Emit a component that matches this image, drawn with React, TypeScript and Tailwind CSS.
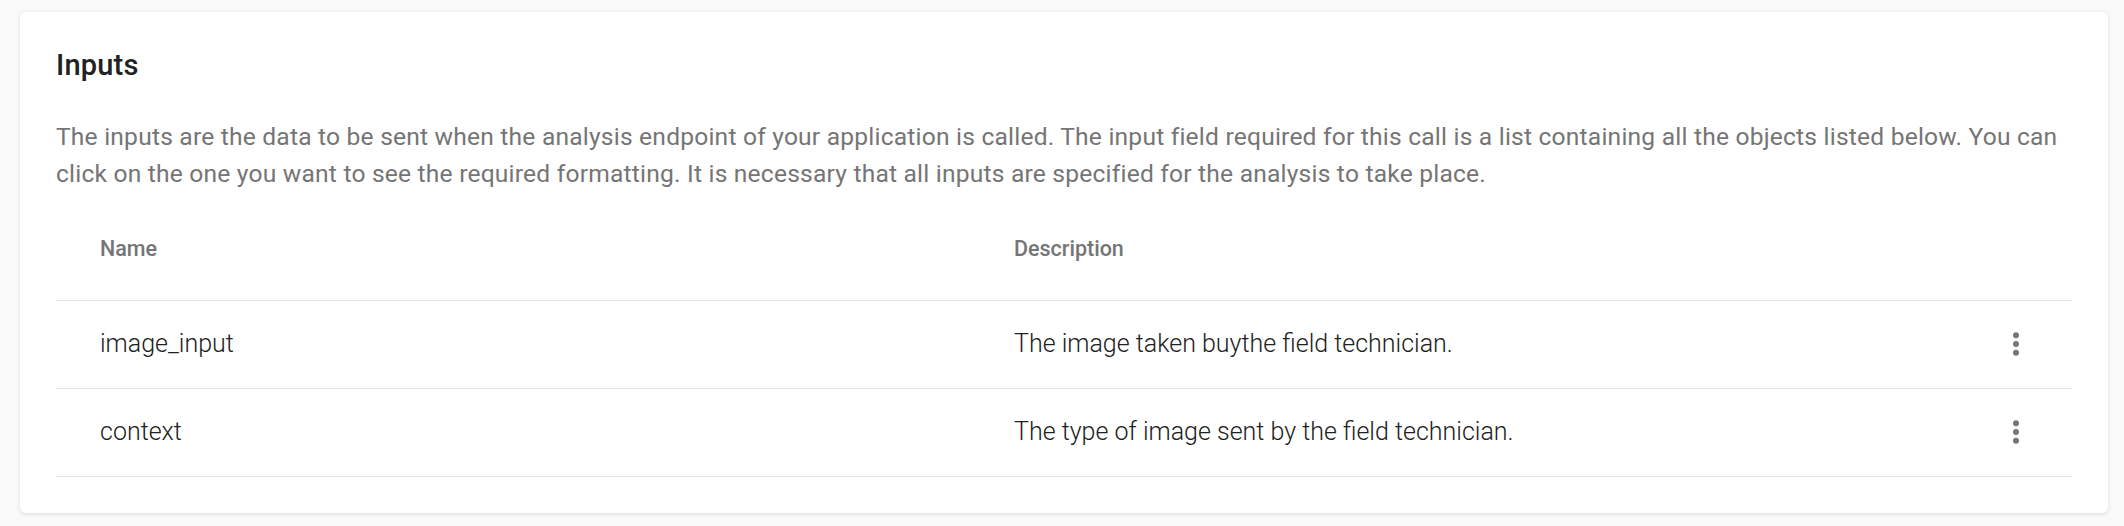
const inputs = [
  { name: 'image_input', description: 'The image taken buythe field technician.' },
  { name: 'context', description: 'The type of image sent by the field technician.' },
]

function MoreVert() {
  return (
    <svg width="34" height="34" viewBox="0 0 24 24" fill="#757575">
      <circle cx="12" cy="5.85" r="2.1" />
      <circle cx="12" cy="12" r="2.1" />
      <circle cx="12" cy="18.15" r="2.1" />
    </svg>
  )
}

export default function App() {
  return (
    <div
      className="min-h-screen bg-[#f9f9f9] pt-[12px] pl-[20px] pr-[16px]"
      style={{ fontFamily: 'Roboto, "Liberation Sans", sans-serif' }}
    >
      <div className="rounded-[6px] bg-white px-[36px] pt-[36px] pb-[36px] shadow-[0_1px_4px_rgba(0,0,0,0.12)]">
        {/* Title */}
        <h2 className="text-[29px] leading-[34px] font-medium tracking-[0.2px] text-[#212121]">Inputs</h2>

        {/* Explanation */}
        <p className="mt-[36px] text-[24.6px] leading-[37.33px] tracking-[0.2px] text-[#757575]">
          The inputs are the data to be sent when the analysis endpoint of your application is called. The input field
          required for this call is a list containing all the objects listed below. You can click on the one you want to
          see the required formatting. It is necessary that all inputs are specified for the analysis to take place.
        </p>

        {/* Table */}
        <div>
          <div className="flex items-center pl-[44px] pt-[44px] pb-[39px] border-b-[1.5px] border-[#e2e2e2]">
            <div className="w-[914px] text-[21.5px] leading-[24px] font-medium text-[#757575]">Name</div>
            <div className="flex-1 text-[21.5px] leading-[24px] font-medium text-[#757575]">Description</div>
          </div>
          {inputs.map((input) => (
            <div
              key={input.name}
              className="flex h-[88px] items-center pl-[44px] border-b-[1.5px] border-[#e2e2e2]"
            >
              <div className="w-[914px] text-[25px] leading-[32px] font-light text-[#212121]">{input.name}</div>
              <div className="flex-1 text-[25px] leading-[32px] font-light text-[#212121]">{input.description}</div>
              <button className="flex w-[112px] justify-center">
                <MoreVert />
              </button>
            </div>
          ))}
        </div>
      </div>
    </div>
  )
}
